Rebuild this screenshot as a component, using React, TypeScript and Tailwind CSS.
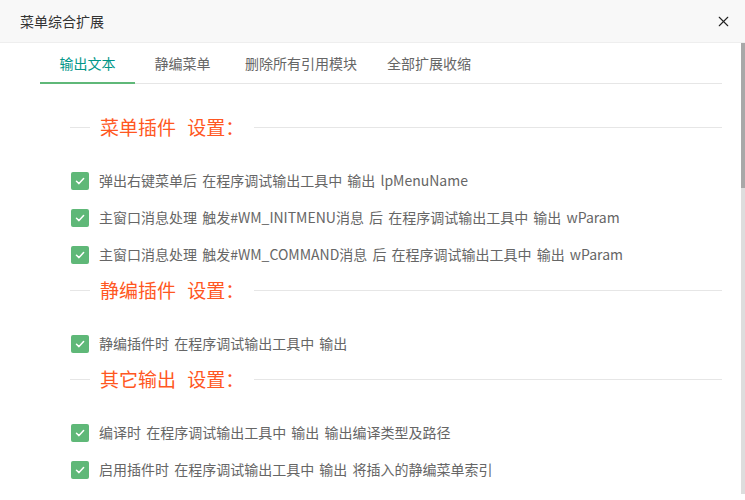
import { X } from 'lucide-react'

const tabs = ['输出文本', '静编菜单', '删除所有引用模块', '全部扩展收缩']

const sections = [
  {
    title: '菜单插件 设置：',
    items: [
      '弹出右键菜单后 在程序调试输出工具中 输出 lpMenuName',
      '主窗口消息处理 触发#WM_INITMENU消息 后 在程序调试输出工具中 输出 wParam',
      '主窗口消息处理 触发#WM_COMMAND消息 后 在程序调试输出工具中 输出 wParam',
    ],
  },
  {
    title: '静编插件 设置：',
    items: ['静编插件时 在程序调试输出工具中 输出'],
  },
  {
    title: '其它输出 设置：',
    items: ['编译时 在程序调试输出工具中 输出 输出编译类型及路径', '启用插件时 在程序调试输出工具中 输出 将插入的静编菜单索引'],
  },
]

function Checkbox() {
  return (
    <span className="flex h-[18px] w-[18px] shrink-0 items-center justify-center rounded-[2px] bg-[#5FB878]">
      <svg width="12" height="12" viewBox="0 0 12 12" fill="none">
        <path d="M2.5 6.2 L5 8.6 L9.6 3.6" stroke="white" strokeWidth="1.5" strokeLinecap="round" strokeLinejoin="round" />
      </svg>
    </span>
  )
}

export default function App() {
  return (
    <div
      className="flex h-[500px] w-[745px] flex-col overflow-hidden bg-white"
      style={{ fontFamily: '"Microsoft YaHei", "Noto Sans CJK SC", "Noto Sans", sans-serif' }}
    >
      <div className="flex h-[43px] shrink-0 items-center justify-between border-b border-[#eeeeee] bg-[#f8f8f8] pl-5 pr-[13px]">
        <span className="text-[14px] text-[#333]">菜单综合扩展</span>
        <X size={17} strokeWidth={1.5} className="text-[#222]" />
      </div>

      <div className="flex min-h-0 flex-1">
        <div className="flex-1 pl-10 pr-[19px]">
          <div className="flex h-[41px] border-b border-[#e6e6e6]">
            {tabs.map((tab, i) => (
              <div
                key={tab}
                className={
                  'relative min-w-[95px] px-[15px] text-center text-[14px] leading-[40px] ' +
                  (i === 0 ? 'text-[#009688]' : 'text-[#666]')
                }
              >
                {tab}
                {i === 0 ? <span className="absolute bottom-[-1px] left-0 h-[2px] w-full bg-[#5FB878]" /> : null}
              </div>
            ))}
          </div>

          <div className="ml-[30px] mt-[28px]">
            {sections.map((section, si) => (
              <div key={section.title} className={si > 0 ? 'mt-[2px]' : ''}>
                <div className="flex h-[30px] items-center">
                  <span className="h-px w-[20px] bg-[#e6e6e6]" />
                  <span className="px-[10px] text-[19px] leading-[30px] text-[#FF5722] [word-spacing:7px]">
                    {section.title}
                  </span>
                  <span className="h-px flex-1 bg-[#e6e6e6]" />
                </div>
                <div className="mt-[20px]">
                  {section.items.map((item) => (
                    <div key={item} className="flex h-[37px] items-center gap-[10px] pl-px">
                      <Checkbox />
                      <span className="text-[14px] text-[#666] [word-spacing:2px]">{item}</span>
                    </div>
                  ))}
                </div>
              </div>
            ))}
          </div>
        </div>

        <div className="mb-[6px] flex w-[4px] shrink-0 flex-col bg-[#dddddd]">
          <div className="h-[145px] bg-[#a8a8a8]" />
        </div>
      </div>
    </div>
  )
}
